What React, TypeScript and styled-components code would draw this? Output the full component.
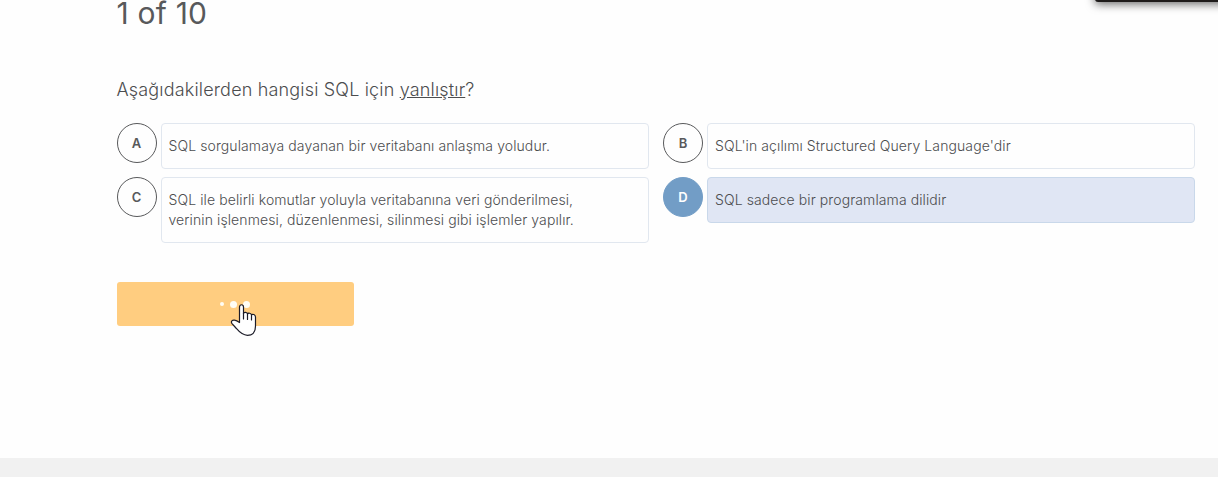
import React from "react";
import styled, { createGlobalStyle } from "styled-components";

const GlobalStyle = createGlobalStyle`
  * { box-sizing: border-box; }
  body {
    margin: 0;
    overflow: hidden;
    background: #fefefe;
    font-family: Inter, "Noto Sans", sans-serif;
    color: #58595b;
  }
`;

const Page = styled.div`
  position: relative;
  display: flex;
  flex-direction: column;
  height: 477px;
  overflow: hidden;
`;

const Quiz = styled.main`
  flex: 1;
  width: 1079px;
  margin-left: 116.5px;
`;

const Progress = styled.h1`
  margin: 0;
  font-size: 30px;
  line-height: 27px;
  font-weight: 400;
  letter-spacing: 0.2px;
`;

const Question = styled.p`
  margin: 50px 0 0;
  font-size: 18px;
  line-height: 26px;
  font-weight: 300;
  letter-spacing: 0.17px;
  color: #4c4d4f;
`;

const Choices = styled.div`
  display: grid;
  grid-template-columns: 532px 532px;
  gap: 8px 14.5px;
  align-items: start;
  margin-top: 20px;
`;

const Choice = styled.div`
  display: flex;
  align-items: flex-start;
  gap: 4px;
`;

const Letter = styled.span<{ $selected?: boolean }>`
  flex: none;
  width: 40px;
  height: 40px;
  border: 1px solid ${(p) => (p.$selected ? "#729dc6" : "#58595b")};
  border-radius: 50%;
  background: ${(p) => (p.$selected ? "#729dc6" : "#fefefe")};
  color: ${(p) => (p.$selected ? "#fff" : "#58595b")};
  font-size: 13px;
  line-height: 38px;
  font-weight: 600;
  text-align: center;
`;

const Answer = styled.div<{ $selected?: boolean }>`
  flex: 1;
  padding: 12px 7px;
  border: 1px solid ${(p) => (p.$selected ? "#c9d8ea" : "#e1e7ef")};
  border-radius: 4px;
  background: ${(p) => (p.$selected ? "#e0e6f4" : "#fefefe")};
  font-size: 14px;
  line-height: 20px;
  font-weight: 300;
  letter-spacing: 0.1px;
  color: #4c4d4f;
`;

const Submit = styled.button`
  display: flex;
  align-items: center;
  justify-content: center;
  gap: 6px;
  width: 237px;
  height: 44px;
  margin-top: 39px;
  padding: 0;
  border: 0;
  border-radius: 3px;
  background: #ffcd80;
`;

const Dot = styled.span<{ $size: number }>`
  width: ${(p) => p.$size}px;
  height: ${(p) => p.$size}px;
  border-radius: 50%;
  background: #fffdf5;
`;

const Pointer = styled.svg`
  position: absolute;
  left: 230px;
  top: 303px;
`;

const FloatingBar = styled.div`
  position: absolute;
  top: -20px;
  left: 1095px;
  right: -20px;
  height: 22px;
  border-radius: 3px;
  background: #1f1c1b;
  box-shadow: 0 2px 10px rgba(0, 0, 0, 0.6);
`;

const Footer = styled.footer`
  height: 19px;
  background: #f1f1f1;
`;

const choices: { letter: string; lines: string[]; selected?: boolean }[] = [
  { letter: "A", lines: ["SQL sorgulamaya dayanan bir veritabanı anlaşma yoludur."] },
  { letter: "B", lines: ["SQL'in açılımı Structured Query Language'dir"] },
  {
    letter: "C",
    lines: [
      "SQL ile belirli komutlar yoluyla veritabanına veri gönderilmesi,",
      "verinin işlenmesi, düzenlenmesi, silinmesi gibi işlemler yapılır.",
    ],
  },
  { letter: "D", lines: ["SQL sadece bir programlama dilidir"], selected: true },
];

export default function App() {
  return (
    <Page>
      <GlobalStyle />
      <Quiz>
        <Progress>1 of 10</Progress>
        <Question>
          Aşağıdakilerden hangisi SQL için <u>yanlıştır</u>?
        </Question>
        <Choices>
          {choices.map((c) => (
            <Choice key={c.letter}>
              <Letter $selected={c.selected}>{c.letter}</Letter>
              <Answer $selected={c.selected}>
                {c.lines.map((line) => (
                  <div key={line}>{line}</div>
                ))}
              </Answer>
            </Choice>
          ))}
        </Choices>
        <Submit aria-label="Loading">
          <Dot $size={4} />
          <Dot $size={7} />
          <Dot $size={7} />
        </Submit>
      </Quiz>
      <Footer />
      <FloatingBar />
      <Pointer width="28" height="34" viewBox="0 0 28 34">
        <path
          d="M9.500 19.500V4C9.500 1 13.500 1 13.500 4V10.500C13.800 8.700 17.300 9 17.500 11C18 9.700 21.300 10 21.500 12C22.200 10.700 25.500 11.200 25.500 14V23C25.500 28.500 23 32.300 17.500 32.300C11.500 32.300 8.500 28 5.500 24.500L1.800 20.300C.7 18.300 2.300 16.800 4.500 17.200C6.500 17.600 8 18.500 9.500 19.500Z"
          fill="#fff"
          stroke="#1c1c28"
          strokeWidth="1.2"
          strokeLinejoin="round"
        />
        <path d="M13.500 10V16M17.500 11V16.500M21.500 12V17" fill="none" stroke="#1c1c28" strokeWidth="1.2" strokeLinecap="round" />
      </Pointer>
    </Page>
  );
}
